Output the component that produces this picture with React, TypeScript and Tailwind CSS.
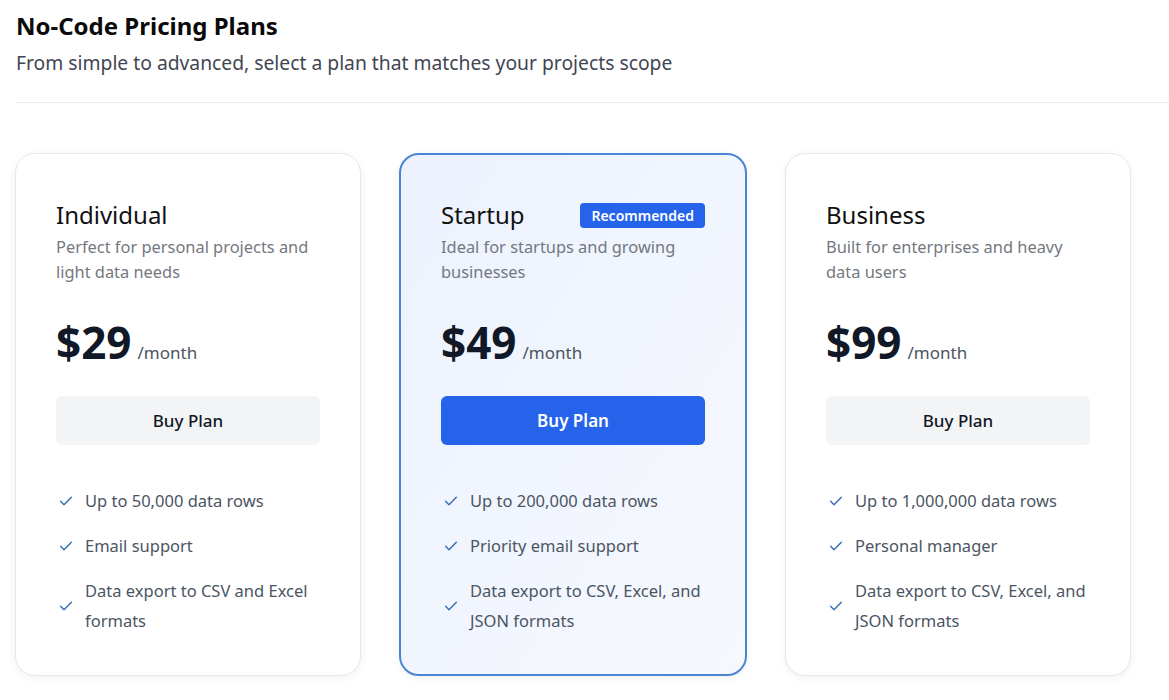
import React from "react";

type Plan = {
  name: string;
  desc: string;
  price: string;
  features: string[];
  featured?: boolean;
};

const plans: Plan[] = [
  {
    name: "Individual",
    desc: "Perfect for personal projects and light data needs",
    price: "$29",
    features: ["Up to 50,000 data rows", "Email support", "Data export to CSV and Excel formats"],
  },
  {
    name: "Startup",
    desc: "Ideal for startups and growing businesses",
    price: "$49",
    features: ["Up to 200,000 data rows", "Priority email support", "Data export to CSV, Excel, and JSON formats"],
    featured: true,
  },
  {
    name: "Business",
    desc: "Built for enterprises and heavy data users",
    price: "$99",
    features: ["Up to 1,000,000 data rows", "Personal manager", "Data export to CSV, Excel, and JSON formats"],
  },
];

function Check() {
  return (
    <svg width="16" height="16" viewBox="0 0 24 24" fill="none" stroke="#3a6fb4" strokeWidth="2.2" strokeLinecap="round" strokeLinejoin="round" className="shrink-0">
      <path d="M4 12.5l5 5L20 6.5" />
    </svg>
  );
}

function Card({ plan }: { plan: Plan }) {
  const f = plan.featured;
  return (
    <div
      className={
        f
          ? "w-[348px] rounded-[20px] border-2 border-[#4a84d4] bg-gradient-to-br from-[#ecf2fe] to-[#f6f8fd] px-[40px] pt-[44px] pb-[38px] shadow-[0_2px_8px_rgba(0,0,0,0.06)]"
          : "w-[346px] rounded-[20px] border border-[#e6e7ea] bg-white px-[40px] pt-[45px] pb-[39px] shadow-[0_2px_8px_rgba(0,0,0,0.06)]"
      }
    >
      <div className="flex items-center justify-between">
        <h2 className="text-[24px] leading-[32px] text-[#111111]">{plan.name}</h2>
        {f && (
          <span className="rounded-[4px] bg-[#2563eb] px-[11px] py-[2px] text-[14px] font-semibold leading-[21px] text-white">
            Recommended
          </span>
        )}
      </div>
      <p className="mt-[3px] text-[16.4px] leading-[25px] text-[#737880]">{plan.desc}</p>
      <div className="mt-[34px] flex items-baseline gap-[6px]">
        <span className="text-[44px] font-bold leading-[48px] text-[#111827]">{plan.price}</span>
        <span className="text-[17px] text-[#4b5563]">/month</span>
      </div>
      <button
        className={
          f
            ? "mt-[30px] h-[49px] w-full rounded-[6px] bg-[#2563eb] text-[17px] font-semibold text-white"
            : "mt-[30px] h-[49px] w-full rounded-[6px] bg-[#f3f4f6] text-[17px] font-medium text-[#111827]"
        }
      >
        Buy Plan
      </button>
      <ul className="mt-[41px] flex flex-col gap-[15px]">
        {plan.features.map((t) => (
          <li key={t} className="flex items-center gap-[11px] pl-[2px]">
            <Check />
            <span className="text-[16.5px] leading-[30px] text-[#4b5563]">{t}</span>
          </li>
        ))}
      </ul>
    </div>
  );
}

export default function App() {
  return (
    <div className="min-h-[700px] bg-white pl-[16px]" style={{ fontFamily: '"Noto Sans", "Open Sans", sans-serif' }}>
      <div className="pt-[10px]">
        <h1 className="text-[24px] font-bold leading-[32px] text-[#0a0a0a]">No-Code Pricing Plans</h1>
        <p className="mt-[8px] text-[19.3px] leading-[26px] text-[#3f4652]">
          From simple to advanced, select a plan that matches your projects scope
        </p>
      </div>
      <div className="mt-[26px] h-px bg-[#ebebeb]" />
      <div className="ml-[-1px] mt-[50px] flex items-start gap-[38px]">
        {plans.map((p) => (
          <Card key={p.name} plan={p} />
        ))}
      </div>
    </div>
  );
}
